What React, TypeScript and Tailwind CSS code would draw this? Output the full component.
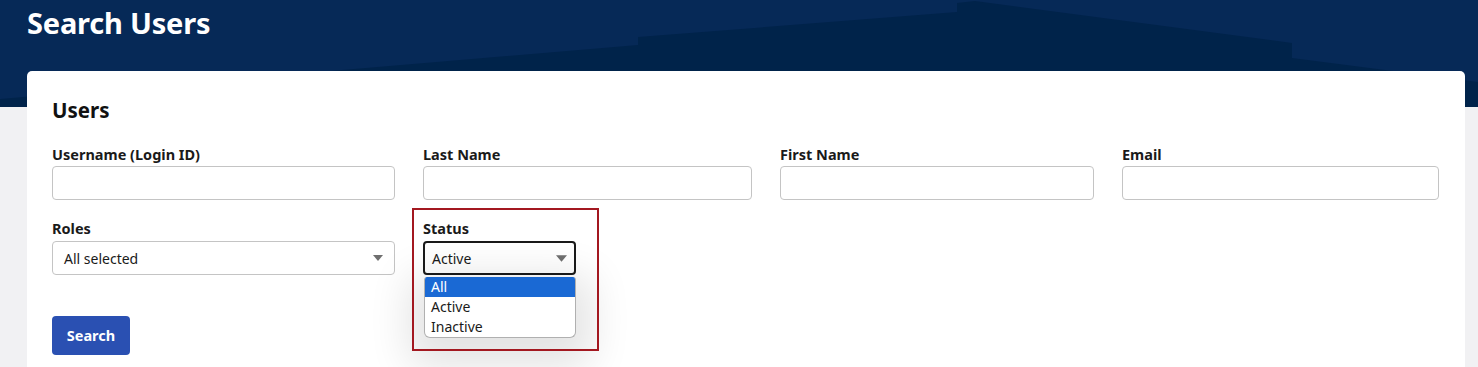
import React from "react";

const Caret = ({ className }: { className?: string }) => (
  <svg className={className} viewBox="0 0 10 6" width="10" height="6">
    <path d="M0 0 L10 0 L5 6 Z" fill="#6f6f6f" />
  </svg>
);

const Field = ({ label }: { label: string }) => (
  <div className="flex flex-col">
    <label className="text-[14.5px] leading-[20px] font-bold text-[#1a1a1a] mb-[2px]">{label}</label>
    <input className="h-[34px] w-full rounded-[4px] border border-[#c4c4c4] bg-white outline-none" />
  </div>
);

export default function App() {
  return (
    <div className="min-h-screen bg-[#f1f1f3] font-['Noto_Sans','Open_Sans',sans-serif] text-[#1a1a1a]">
      <header className="relative h-[107px] overflow-hidden bg-[#062957]">
        <svg className="absolute inset-0" width="1478" height="107" viewBox="0 0 1478 107" preserveAspectRatio="none">
          <polygon
            points="0,99 638,45 638,37 957,12 957,3 975,1 1292,43 1292,58 1478,82 1478,107 0,107"
            fill="#00234a"
          />
        </svg>
        <h1 className="relative pl-[27px] pt-[3px] text-[29px] leading-[40px] font-bold text-white tracking-[-0.2px]">
          Search Users
        </h1>
      </header>
      <main className="relative -mt-[36px] ml-[27px] mr-[13px] rounded-t-[5px] bg-white px-[25px] pt-[25px] pb-[12px]">
        <h2 className="text-[20.5px] leading-[28px] font-bold text-[#111]">Users</h2>
        <div className="mt-[20px] grid grid-cols-[343px_329px_314px_317px] gap-x-[28px]">
          <Field label="Username (Login ID)" />
          <Field label="Last Name" />
          <Field label="First Name" />
          <Field label="Email" />
        </div>
        <div className="mt-[18px] grid grid-cols-[343px_329px_314px_317px] gap-x-[28px]">
          <div className="flex flex-col">
            <label className="text-[14.5px] leading-[20px] font-bold mb-[3px]">Roles</label>
            <div className="flex h-[34px] items-center justify-between rounded-[4px] border border-[#c4c4c4] bg-white pl-[11px] pr-[11px]">
              <span className="text-[14px]">All selected</span>
              <Caret className="w-[10px] h-[6px]" />
            </div>
          </div>
          <div className="relative flex flex-col">
            <label className="text-[14.5px] leading-[20px] font-bold mb-[3px]">Status</label>
            <div className="relative w-[153px]">
              <div className="flex h-[34px] items-center justify-between rounded-[4px] border-2 border-[#1a1a1a] bg-white pl-[7px] pr-[7px]">
                <span className="text-[14px]">Active</span>
                <Caret className="w-[11px] h-[7px]" />
              </div>
              <ul className="absolute left-[1px] top-[36px] z-10 w-[152px] overflow-hidden rounded-b-[6px] rounded-t-[3px] border border-[#b0b0b0] border-t-0 bg-white text-[14px] leading-[20px] shadow-[0_14px_40px_16px_rgba(0,0,0,0.11)]">
                <li className="bg-[#1a69d4] pl-[6px] text-white">All</li>
                <li className="pl-[6px]">Active</li>
                <li className="pl-[6px]">Inactive</li>
              </ul>
            </div>
            <div className="pointer-events-none absolute -left-[11px] -top-[10px] z-20 h-[143px] w-[187px] border-2 border-[#a31820]" />
          </div>
        </div>
        <div className="mt-[41px]">
          <button className="h-[39px] w-[78px] rounded-[4px] bg-[#2a50b2] text-[14.5px] font-bold text-white">
            Search
          </button>
        </div>
      </main>
    </div>
  );
}
